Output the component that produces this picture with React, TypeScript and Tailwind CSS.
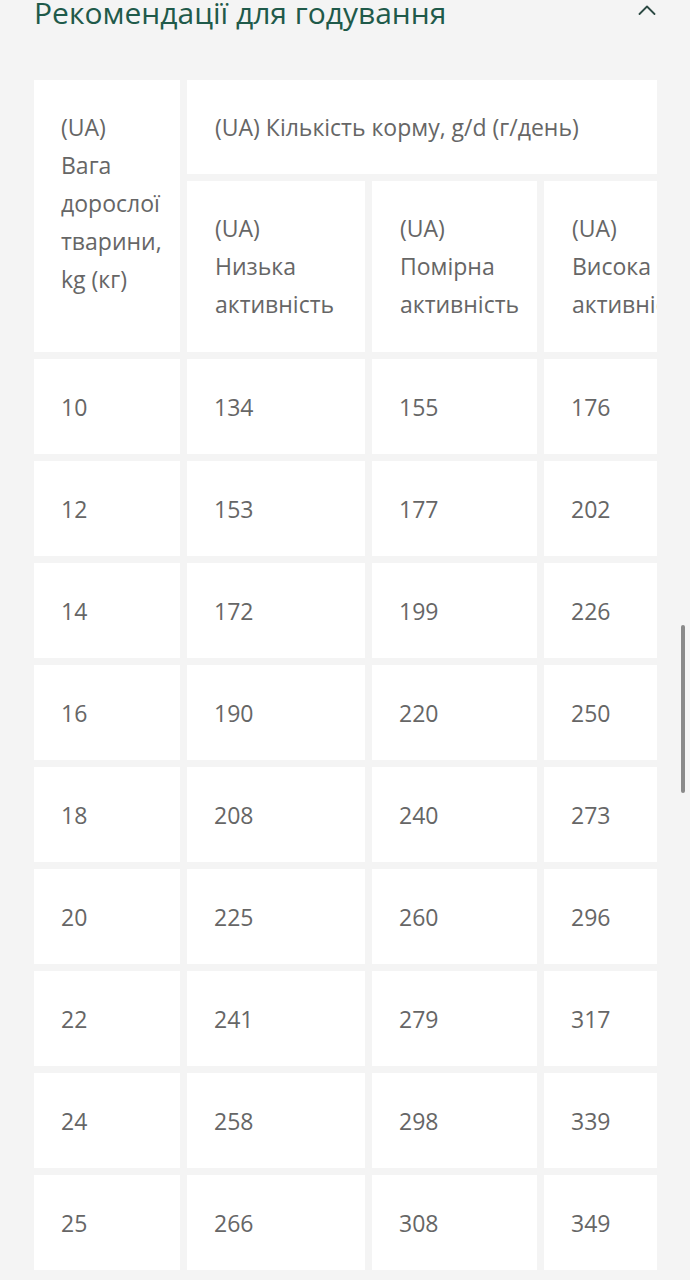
import React from "react";

const rows: [string, string, string, string][] = [
  ["10", "134", "155", "176"],
  ["12", "153", "177", "202"],
  ["14", "172", "199", "226"],
  ["16", "190", "220", "250"],
  ["18", "208", "240", "273"],
  ["20", "225", "260", "296"],
  ["22", "241", "279", "317"],
  ["24", "258", "298", "339"],
  ["25", "266", "308", "349"],
];

export default function App() {
  return (
    <div
      className="relative w-[690px] h-[1280px] overflow-hidden bg-[#f4f4f4]"
      style={{ fontFamily: '"Open Sans", "Noto Sans", sans-serif' }}
    >
      <div className="flex items-center justify-between pl-[34px] pr-[33px] h-[28px] -mt-[1px]">
        <h2 className="text-[30px] leading-[32px] text-[#1f5a4a] whitespace-nowrap">
          Рекомендації для годування
        </h2>
        <svg width="18" height="10" viewBox="0 0 18 10" className="mr-[1px] -mt-[6px]">
          <path d="M1.5 9 L9 1.5 L16.5 9" fill="none" stroke="#2d4a44" strokeWidth="1.8" strokeLinecap="round" strokeLinejoin="round" />
        </svg>
      </div>

      <div className="mt-[53px] mx-[34px] w-[623px] overflow-hidden">
        <div className="grid grid-cols-[146px_178px_165px_200px] gap-[7px] w-max text-[23px] leading-[38px] text-[#666666]">
          <div className="row-span-2 bg-white pl-[27px] pt-[28px] pr-[4px]">
            (UA)
            <br />
            Вага дорослої тварини, kg (кг)
          </div>
          <div className="col-span-3 bg-white px-[28px] py-[28px] h-[94px] whitespace-nowrap">
            (UA) Кількість корму, g/d (г/день)
          </div>
          <div className="bg-white px-[28px] py-[28px] h-[171px] whitespace-nowrap">
            (UA)
            <br />
            Низька
            <br />
            активність
          </div>
          <div className="bg-white px-[28px] py-[28px] h-[171px] whitespace-nowrap">
            (UA)
            <br />
            Помірна
            <br />
            активність
          </div>
          <div className="bg-white px-[28px] py-[28px] h-[171px] whitespace-nowrap">
            (UA)
            <br />
            Висока
            <br />
            активність
          </div>
          {rows.map((r) =>
            r.map((v, i) => (
              <div
                key={r[0] + "-" + i}
                className="bg-white px-[27px] h-[95px] flex items-center"
              >
                {v}
              </div>
            ))
          )}
        </div>
      </div>

      <div className="absolute left-[681px] top-[625px] w-[4px] h-[168px] rounded-full bg-[#8a8a8a]" />
    </div>
  );
}
